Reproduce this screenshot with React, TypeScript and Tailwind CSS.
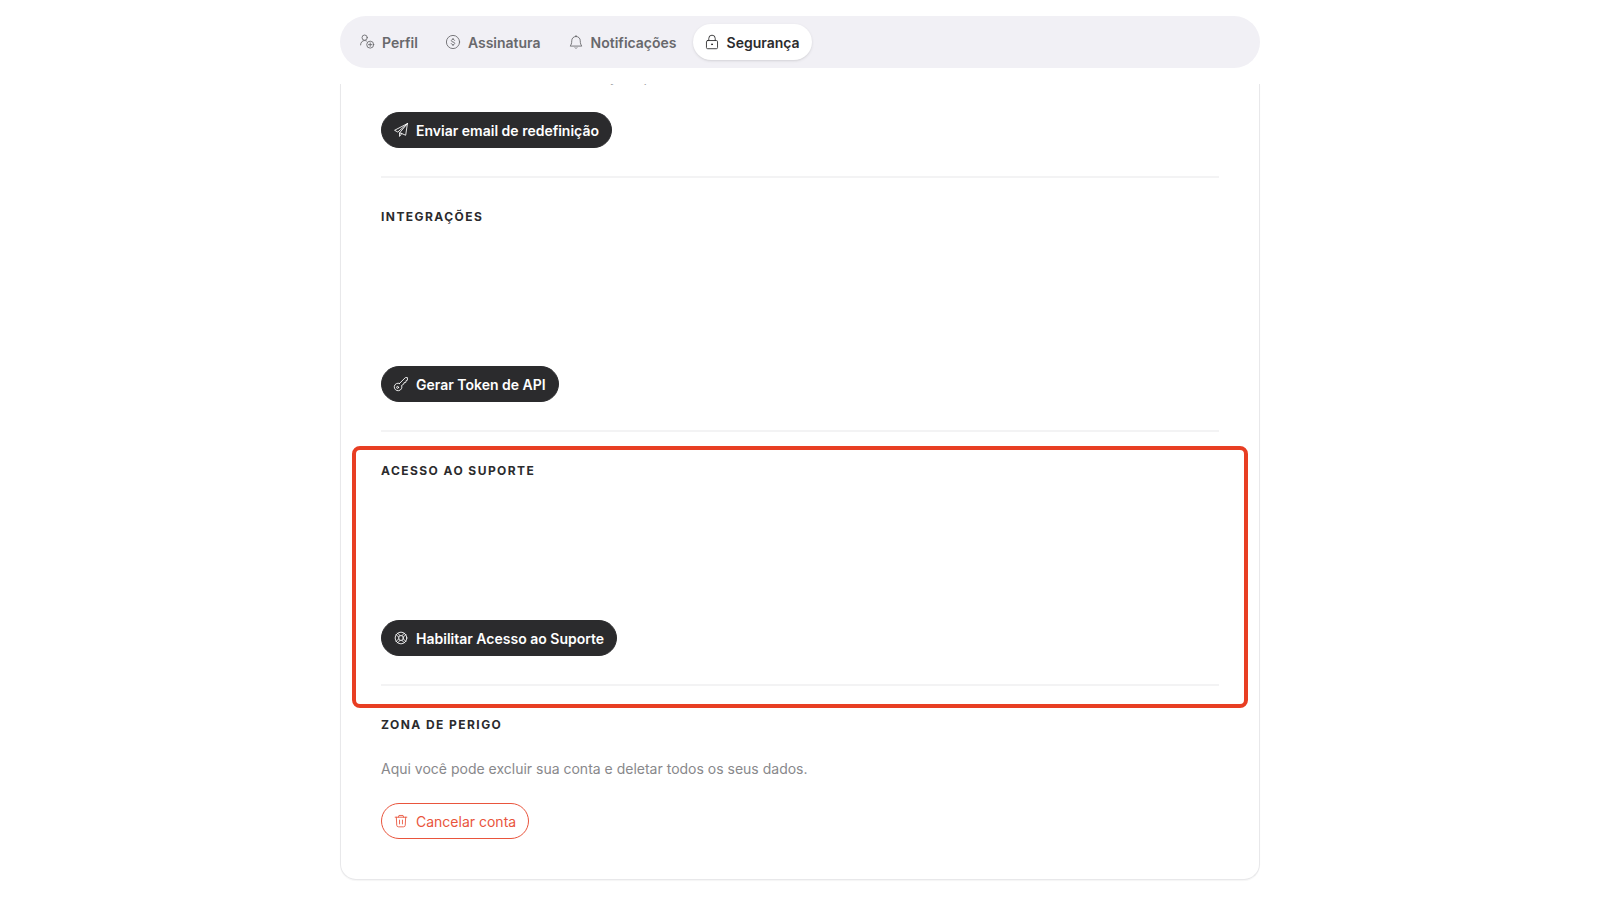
import type { ReactNode } from 'react';

function Icon({ children }: { children: ReactNode }) {
  return (
    <svg
      viewBox="0 0 24 24"
      fill="none"
      stroke="currentColor"
      strokeWidth="1.5"
      strokeLinecap="round"
      strokeLinejoin="round"
      aria-hidden="true"
      className="size-3.5 shrink-0 overflow-visible"
    >
      {children}
    </svg>
  );
}

const UserIcon = () => (
  <Icon>
    <circle cx="8" cy="4.5" r="4.5" />
    <path d="M1 17c0-4.500 3-7.500 7-7.500 1.200 0 2.200.2 3.100.7" />
    <circle cx="17.500" cy="16.500" r="6" />
    <path d="M17.500 13.500v6M14.500 16.500h6" />
  </Icon>
);

const DollarIcon = () => (
  <Icon>
    <circle cx="12" cy="12" r="11.300" />
    <path d="M14.800 9.300C14.500 8.100 13.400 7.500 12 7.500c-1.600 0-2.800.8-2.800 2.200 0 3.100 5.700 1.500 5.700 4.600 0 1.400-1.300 2.200-2.900 2.200s-2.700-.7-3-1.900M12 5.800v1.700M12 16.500v1.700" />
  </Icon>
);

const BellIcon = () => (
  <Icon>
    <path d="M12 1v1.500M12 2.500c-4.500 0-7.300 3.300-7.300 7.500 0 5-1.200 6.800-2.700 9h20c-1.500-2.200-2.700-4-2.700-9 0-4.200-2.800-7.500-7.300-7.500zM10.300 22c.8 1.200 2.600 1.200 3.400 0" />
  </Icon>
);

const LockIcon = () => (
  <Icon>
    <rect x="2.500" y="9.500" width="19" height="14" rx="2" />
    <path d="M6.500 9.500V5.800a5.500 5.500 0 0 1 11 0v3.700" />
    <circle cx="12" cy="16" r="0.900" fill="currentColor" />
  </Icon>
);

const SendIcon = () => (
  <Icon>
    <path d="M23 1 1 12.500l5.500 3L23 1zM23 1l-3 20-8-3.500M23 1 9.500 17v6l3.500-4.500M9.500 17l2.500.500" />
  </Icon>
);

const KeyIcon = () => (
  <Icon>
    <path d="M9.500 11 19.500 1H23v4.500l-2.200.7-.6 3-3 .6-.6 2.500-3.600 2.200a6.500 6.500 0 1 1-3.500-3.500z" />
    <circle cx="6.200" cy="17.800" r="1.700" />
  </Icon>
);

const SupportIcon = () => (
  <Icon>
    <circle cx="12" cy="12" r="10" />
    <circle cx="12" cy="12" r="4.200" />
    <path d="M3.600 6.100 8 10.500M6.100 3.600 10.500 8M20.400 6.100 16 10.500M17.900 3.600 13.500 8M3.600 17.900 8 13.500M6.100 20.400 10.500 16M20.400 17.900 16 13.500M17.900 20.400 13.500 16" />
  </Icon>
);

const TrashIcon = () => (
  <Icon>
    <path d="M2 5.500h20M4 5.500l.7 13.700a3 3 0 0 0 3 2.800h8.600a3 3 0 0 0 3-2.800L20 5.500M7.500 5.500l1-3h7l1 3M9.500 10.500v6.500M14.500 10.500v6.500" />
  </Icon>
);

const tabs = [
  { label: 'Perfil', icon: <UserIcon />, active: false },
  { label: 'Assinatura', icon: <DollarIcon />, active: false },
  { label: 'Notificações', icon: <BellIcon />, active: false },
  { label: 'Segurança', icon: <LockIcon />, active: true },
];

function Label({ children }: { children: ReactNode }) {
  return <span className="pt-0.5">{children}</span>;
}

function ActionButton({ icon, children }: { icon: ReactNode; children: ReactNode }) {
  return (
    <button
      type="button"
      className="flex h-9 w-fit items-center gap-2 rounded-full border border-[#2b2b2d] bg-[#2b2b2d] px-3 font-semibold text-white"
    >
      {icon}
      <Label>{children}</Label>
    </button>
  );
}

function SectionTitle({ children }: { children: ReactNode }) {
  return (
    <h2 className="text-[12px] leading-[22px] font-bold tracking-[0.12em] text-[#2b2b2d] uppercase">
      {children}
    </h2>
  );
}

export default function App() {
  return (
    <div className="min-h-screen bg-white px-4 pt-4 pb-5 font-['Inter',sans-serif] text-[14px] leading-[22px]">
      <div className="mx-auto flex max-w-[920px] flex-col gap-4">
        <nav aria-label="Configurações" className="flex gap-1 rounded-full bg-[#f1f0f5] p-2">
          {tabs.map((tab) => (
            <a
              key={tab.label}
              href="#"
              aria-current={tab.active ? 'page' : undefined}
              className={
                tab.active
                  ? 'flex h-9 items-center gap-2 rounded-full bg-white px-3 font-semibold text-[#2b2b2d] shadow-sm'
                  : 'flex h-9 items-center gap-2 rounded-full px-3 font-semibold text-[#68686c]'
              }
            >
              {tab.icon}
              <Label>{tab.label}</Label>
            </a>
          ))}
        </nav>

        <main className="rounded-b-2xl border-x border-b border-[#e8e8ea] px-10 pb-10 shadow-[0_1px_1px_rgba(0,0,0,0.04)]">
          <section className="border-b-2 border-[#f3f3f4] pb-7">
            <div className="h-7">
              <div className="flex h-1 flex-col justify-end overflow-hidden">
                <p className="shrink-0 text-[#88888b]">
                  Vamos enviar um email com instruções para redefinir sua senha.
                </p>
              </div>
            </div>
            <ActionButton icon={<SendIcon />}>Enviar email de redefinição</ActionButton>
          </section>

          <section className="flex flex-col gap-[138px] border-b-2 border-[#f3f3f4] py-7">
            <SectionTitle>Integrações</SectionTitle>
            <ActionButton icon={<KeyIcon />}>Gerar Token de API</ActionButton>
          </section>

          <section className="relative flex flex-col gap-[138px] border-b-2 border-[#f3f3f4] py-7">
            <SectionTitle>Acesso ao suporte</SectionTitle>
            <ActionButton icon={<SupportIcon />}>Habilitar Acesso ao Suporte</ActionButton>
            <div className="pointer-events-none absolute -inset-x-[29px] top-[14px] -bottom-6 rounded-lg border-4 border-[#e83e23]" />
          </section>

          <section className="pt-7">
            <SectionTitle>Zona de perigo</SectionTitle>
            <p className="mt-[22px] text-[#88888b]">
              Aqui você pode excluir sua conta e deletar todos os seus dados.
            </p>
            <button
              type="button"
              className="mt-[23px] flex h-9 items-center gap-2 rounded-full border border-[#e9553d] px-3 text-[#e9553d]"
            >
              <TrashIcon />
              <Label>Cancelar conta</Label>
            </button>
          </section>
        </main>
      </div>
    </div>
  );
}
